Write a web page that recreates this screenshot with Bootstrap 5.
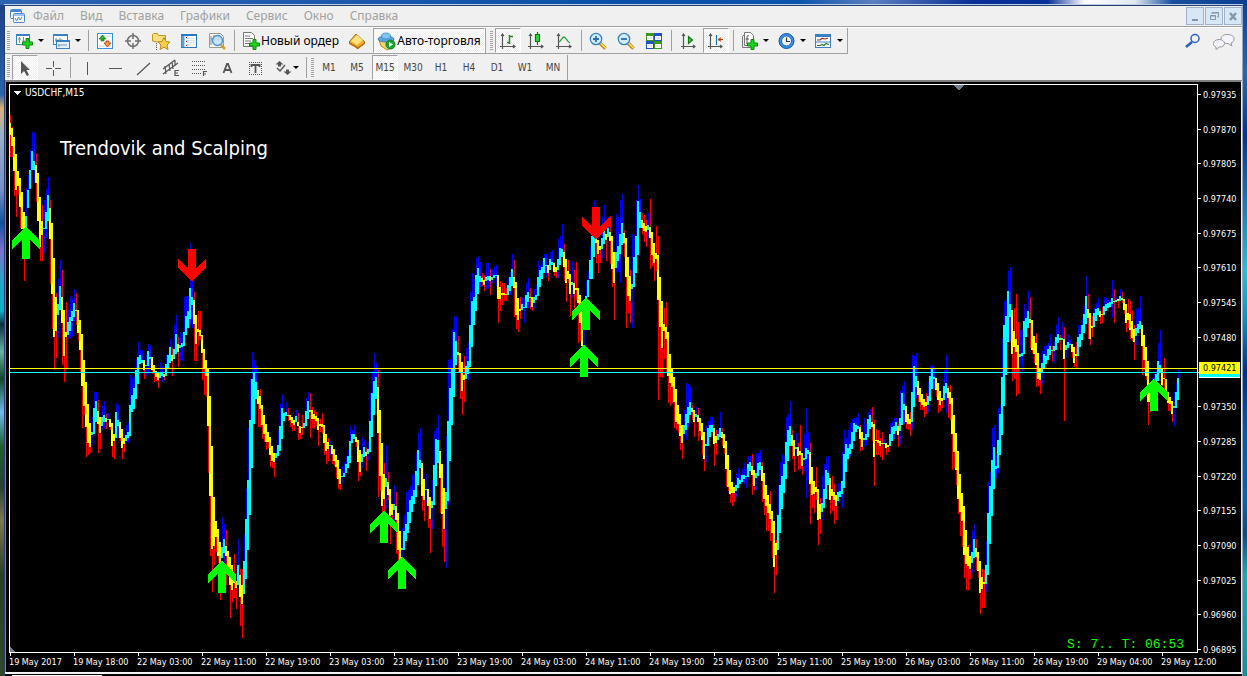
<!DOCTYPE html>
<html lang="ru">
<head>
<meta charset="utf-8">
<meta name="viewport" content="width=device-width, initial-scale=1">
<title>USDCHF,M15</title>
<link rel="stylesheet" href="https://cdn.jsdelivr.net/npm/bootstrap@5.3.0/dist/css/bootstrap.min.css">
<style>
body{font-family:"Noto Sans",sans-serif;font-size:12px;line-height:16px;padding:5px 4px 0 4px;overflow:hidden;
 background:
 linear-gradient(90deg,#2c62b0,#1a58ae 30%,#0a50a8 50%,#0c55ac 64%,#5b80c0 70%,#0a2f96 78%,#05309a 84%,#fff 87%,#e0e8f0 91%,#1a4fa0 94%,#0b3f94) 0 0/100% 5px no-repeat,
 linear-gradient(180deg,#1c3f88,#2a62b4 14%,#e0b070 16%,#9ab0c8 20%,#7890c8 28%,#1050a0 33%,#8070d0 37%,#20a8c8 42%,#10b0cc 46%,#0a3040 48%,#68b0a0 52%,#104828 56%,#70b8f0 61%,#206030 66%,#284038 72%,#807850 77%,#284028 85%,#304828) 0 0/5px 100% no-repeat,
 linear-gradient(180deg,#0b3f94,#2a66b0 11%,#08308c 20%,#1a60a8 27%,#28c0d0 40%,#1090c0 47%,#062c84 55%,#0858a4 64%,#0c60a8 74%,#104878 79%,#20a8b0 85%,#189098) right 0/6px 100% no-repeat,#1b4a98}
.frame{border:1px solid #24406c;border-bottom:0;border-right-color:#93a9c4;background:#f0f0f0;box-shadow:0 -1px 0 #b8cce8}
.menubar{height:21px;border-bottom:1px solid #a0a0a0}
.menubar a{color:#a0a0a0;text-decoration:none}
.menubar nav{gap:16px;padding-left:7px}
.winbtns{gap:1px}
.wbtn{width:18px;height:18px;border:1px solid #9fb2c8;background:#d8e7f5;padding:0;line-height:0}
.tools{height:26px}
.tools.first{border-top:1px solid #fff;height:27px}
.tbar{height:26px;border-bottom:1px solid #a0a0a0;border-right:1px solid #a0a0a0}
.tbar.second{border-bottom:0;height:25px;margin-top:1px}
.grip{width:6px;height:20px;background:repeating-linear-gradient(#a4a4a4 0 1px,#f0f0f0 1px 2px) 2px 0/3px 20px no-repeat}
.sepr{width:6px;height:21px;background:linear-gradient(#a0a0a0,#a0a0a0) 3px 0/1px 100% no-repeat}
.edge{width:3px;height:25px;border-left:1px solid #a0a0a0}
.tb{width:28px;height:25px;border:0;background:none;padding:0;color:#444;font-size:10px;line-height:23px;font-family:"DejaVu Sans Condensed","Noto Sans",sans-serif;white-space:nowrap;display:flex;align-items:center;justify-content:center}
.tb svg,.wbtn svg,.gl{display:block;flex:none}
.tb.down{width:26px;margin:0 1px;border:1px solid #fff;border-top-color:#a0a0a0;border-left-color:#a0a0a0;background:repeating-conic-gradient(#fff 0 25%,#efefef 0 50%) 0 0/2px 2px}
.tb.dd{width:37px;gap:3px;justify-content:flex-start;padding-left:4px}
.tb.dd.tight{width:34px;gap:0}
.tb.txt{color:#000;font:12px/20px "Noto Sans",sans-serif}
.tb.short{height:20px}
.tb.order{width:106px}
.tb.auto{width:112px;margin:0 0 0 2px}
.dd::after{content:"";border:3px solid transparent;border-top-color:#000;border-bottom:0}
.client{border-top:2px solid #808080;border-left:1px solid #808080;border-right:1px solid #f0f0f0;background:#000;min-height:0}
.chartbox{height:100%;width:100%;display:block}
.chartbox text{font-family:"DejaVu Sans Condensed","DejaVu Sans",sans-serif;font-size:9px;fill:#fff}
.under{height:4px;border-top:2px solid #f4f4f4;background:linear-gradient(#fff,#fff) 7px 1px/90px 2px no-repeat #000}
</style>
</head>
<body class="vh-100">
<div class="frame d-flex flex-column h-100">
 <header class="menubar d-flex align-items-center justify-content-between flex-shrink-0">
  <div class="d-flex align-items-center">
   <svg class="gl ms-1" width="17" height="17" viewBox="0 0 17 17" fill="#fff" stroke="#4a86d8"><rect x="1.5" y="1.5" width="11" height="9" rx="1"/><path d="M2 3h10" stroke-width="2"/><rect x="4.500" y="5.500" width="11" height="9" rx="1"/><path d="M5 7h10M6 10l1.500 3 2-4 1.500 3 2-3" fill="none"/></svg>
   <nav class="d-flex"><a href="#">Файл</a><a href="#">Вид</a><a href="#">Вставка</a><a href="#">Графики</a><a href="#">Сервис</a><a href="#">Окно</a><a href="#">Справка</a></nav>
  </div>
  <div class="d-flex winbtns">
   <button class="wbtn" aria-label="Свернуть"><svg width="16" height="16" viewBox="0 0 16 16"><path d="M5 11h6v2H5z" fill="#8496ac"/></svg></button>
   <button class="wbtn" aria-label="Восстановить"><svg width="16" height="16" viewBox="0 0 16 16" fill="none" stroke="#8496ac"><path d="M6 6V4.500h6.500V9H11M6 5h7" /><path d="M4.500 7.500h5v4h-5zM4 8h6" /></svg></button>
   <button class="wbtn" aria-label="Закрыть"><svg width="16" height="16" viewBox="0 0 16 16"><path d="M5 5l6 7M11 5l-6 7" stroke="#8496ac" stroke-width="2.400"/></svg></button>
  </div>
 </header>
 <div class="tools first d-flex justify-content-between align-items-start flex-shrink-0">
  <div class="tbar d-flex align-items-center">
   <span class="grip"></span>
   <button class="tb dd" aria-label="Новый график"><svg width="20" height="20" viewBox="0 0 20 20"><rect x="1.500" y="3.500" width="13" height="10" fill="#fff" stroke="#3a80c4"/><path d="M1 4h14" stroke="#3a80c4" stroke-width="2"/><path d="M4.500 6v6M3 8h3M8.500 6v6M7 10h3" stroke="#7898b8"/><path d="M11 7.500h3v3.500h3.500v3H14v3.500h-3V14H7.500v-3H11z" fill="#18d818" stroke="#0a8a10"/></svg></button>
   <button class="tb dd" aria-label="Профили"><svg width="20" height="20" viewBox="0 0 20 20" fill="#fff" stroke="#3a80c4"><rect x="1.500" y="3.500" width="14" height="10"/><path d="M1 4h15" stroke-width="2"/><path d="M4 7v4M8 7v4M3 9h8" stroke="#7898b8"/><rect x="4.500" y="9.500" width="13" height="8" fill="#e8f2fc"/><path d="M4 10h14" stroke-width="2"/><path d="M7 13v3M6 14h9" stroke="#7898b8"/></svg></button>
   <span class="sepr"></span>
   <button class="tb" aria-label="Обзор рынка"><svg width="20" height="20" viewBox="0 0 20 20"><rect x="2.500" y="2.500" width="15" height="15" fill="#fff" stroke="#3a90dc"/><path d="M4 5h12M4 15h12" stroke="#c4d8e8"/><path d="M7.500 4l3.500 4H9v2H6V8H4z" fill="#20b020" stroke="#0a7a10" stroke-width=".6"/><path d="M12.500 16L9 12h2v-2h3v2h2z" fill="#ff9040" stroke="#b03808" stroke-width=".8"/></svg></button>
   <button class="tb" aria-label="Окно данных"><svg width="20" height="20" viewBox="0 0 20 20" fill="none" stroke="#707070" stroke-width="1.500"><circle cx="10" cy="10" r="5.500"/><path d="M10 2v6M10 12v6M2 10h6M12 10h6"/></svg></button>
   <button class="tb" aria-label="Навигатор"><svg width="20" height="20" viewBox="0 0 20 20"><path d="M1.500 10V3.500l1-1h4l1 2h7V11h-8z" fill="#fce080" stroke="#c09020"/><path d="M5.500 12v7" stroke="#555" stroke-dasharray="1 1"/><path d="M13 6.500l2 4 4 .5-3 3 1 4.500-4-2.300-4 2.300 1-4.500-3-3 4-.5z" fill="#f8d048" stroke="#b88820"/></svg></button>
   <button class="tb" aria-label="Терминал"><svg width="20" height="20" viewBox="0 0 20 20"><rect x="2.500" y="3.500" width="15" height="13" fill="#fff" stroke="#2a78c4"/><path d="M2 4h16" stroke="#2a78c4" stroke-width="2"/><path d="M4 5v11" stroke="#5aa0e0" stroke-width="3"/><path d="M7 7.500h9M7 9.500h9M7 11.500h9M7 13.500h9" stroke="#d4e0ea"/><path d="M7.500 6v9" stroke="#e02020" stroke-dasharray="1 3"/></svg></button>
   <button class="tb" aria-label="Тестер стратегий"><svg width="20" height="20" viewBox="0 0 20 20"><path d="M2.500 2.500h11l3 3v11h-14z" fill="#f4f4f4" stroke="#999"/><path d="M4 5v9M7 4v8M4 8h10M11 4v6" stroke="#888"/><circle cx="10.500" cy="9.500" r="5" fill="#bfe2fa" fill-opacity=".85" stroke="#4890c8" stroke-width="1.300"/><path d="M14 14l4 4" stroke="#d0a020" stroke-width="2.500"/></svg></button>
   <span class="sepr"></span>
   <button class="tb txt order"><svg width="20" height="20" viewBox="0 0 20 20"><path d="M2.500 1.500h8l3 3v11h-11z" fill="#fff" stroke="#777"/><path d="M4 5h5M4 7.500h8M4 10h6M4 12.500h4" stroke="#777"/><path d="M12 8.500h3v3.500h3.500v3H15v3.500h-3V15H8.500v-3H12z" fill="#18d818" stroke="#0a8a10"/></svg>Новый ордер</button>
   <button class="tb" aria-label="MetaEditor"><svg width="20" height="20" viewBox="0 0 20 20"><path d="M2 11l7-8 9 8-7 7z" fill="#e8b030" stroke="#a87010"/><path d="M4 10l6-6 6 5-6 5z" fill="#ffe080"/><path d="M2 11l9 5 7-5v2l-7 5-9-5z" fill="#b87818"/></svg></button>
   <button class="tb txt down auto"><svg width="20" height="20" viewBox="0 0 20 20"><path d="M2 9l2 6 6 4 6-3V9z" fill="#f0d070" stroke="#b89028"/><ellipse cx="9" cy="8" rx="8" ry="3" fill="#58a8e0" stroke="#2868a0" stroke-width=".7"/><ellipse cx="9" cy="5" rx="4.500" ry="3" fill="#80c4f0" stroke="#3880b8" stroke-width=".7"/><circle cx="13.500" cy="13.500" r="4.500" fill="#18a830" stroke="#0a8020"/><path d="M12 11l4 2.500-4 2.500z" fill="#fff"/></svg>Авто-торговля</button>
   <span class="edge"></span><span class="grip"></span>
   <button class="tb down" aria-label="Бары"><svg width="20" height="20" viewBox="0 0 20 20" fill="none" stroke="#555" stroke-width="1.200"><path d="M4.500 3v15M2 15.500h15M3 5l1.500-2L6 5M15 14l2 1.500-2 1.500"/><path d="M11.500 4v9M9 11.500h3M12 5.500h3" stroke="#1a8a20" stroke-width="1.500"/></svg></button>
   <button class="tb" aria-label="Свечи"><svg width="20" height="20" viewBox="0 0 20 20" fill="none" stroke="#555" stroke-width="1.200"><path d="M4.500 3v15M2 15.500h15M3 5l1.500-2L6 5M15 14l2 1.500-2 1.500"/><path d="M11.500 1v13" stroke="#0a7a10"/><path d="M9.500 3.500h4v7h-4z" fill="#30d840" stroke="#0a7a10"/></svg></button>
   <button class="tb" aria-label="Линия"><svg width="20" height="20" viewBox="0 0 20 20" fill="none" stroke="#555" stroke-width="1.200"><path d="M4.500 3v15M2 15.500h15M3 5l1.500-2L6 5M15 14l2 1.500-2 1.500"/><path d="M5 11c3-2 3-5 5-5s3 5 6 6" stroke="#30a040" stroke-width="1.300"/></svg></button>
   <span class="sepr"></span>
   <button class="tb" aria-label="Увеличить"><svg width="20" height="20" viewBox="0 0 20 20"><path d="M12 12l5.500 5.500" stroke="#b88818" stroke-width="3.500"/><path d="M12.500 12l5 5" stroke="#ffe060" stroke-width="1.500"/><circle cx="8" cy="8" r="5.700" fill="#d0ecfc" stroke="#3a80c4" stroke-width="1.300"/><path d="M8 5v6M5 8h6" stroke="#2a70b4" stroke-width="1.800"/></svg></button>
   <button class="tb" aria-label="Уменьшить"><svg width="20" height="20" viewBox="0 0 20 20"><path d="M12 12l5.500 5.500" stroke="#b88818" stroke-width="3.500"/><path d="M12.500 12l5 5" stroke="#ffe060" stroke-width="1.500"/><circle cx="8" cy="8" r="5.700" fill="#d0ecfc" stroke="#3a80c4" stroke-width="1.300"/><path d="M5 8h6" stroke="#2a70b4" stroke-width="1.800"/></svg></button>
   <button class="tb" aria-label="Окна мозаикой"><svg width="20" height="20" viewBox="0 0 20 20"><path d="M2 2h8v8H2zM10 10h8v8h-8z" fill="#3a9a10"/><path d="M10 2h8v8h-8zM2 10h8v8H2z" fill="#2050c8"/><path d="M3 5h6v4H3zM11 5h6v4h-6zM3 13h6v4H3zM11 13h6v4h-6z" fill="#fff"/><path d="M4 7h4M12 7h4M4 15h4M12 15h4" stroke="#c0d8e8"/></svg></button>
   <span class="sepr"></span>
   <button class="tb" aria-label="Автопрокрутка"><svg width="20" height="20" viewBox="0 0 20 20" fill="none" stroke="#555" stroke-width="1.200"><path d="M5.500 3v15M3 15.500h14M4 5l1.500-2L7 5M15 14l2 1.500-2 1.500"/><path d="M10.500 5.500v7l4-3.500z" fill="#30d040" stroke="#0a7a10"/></svg></button>
   <button class="tb down" aria-label="Сдвиг графика"><svg width="20" height="20" viewBox="0 0 20 20" fill="none" stroke="#555" stroke-width="1.200"><path d="M4.500 3v15M2 15.500h14M3 5l1.500-2L6 5M14 14l2 1.500-2 1.500"/><path d="M10.500 4v10" stroke="#2870a8"/><path d="M12 8.500h5" stroke="#c04010"/><path d="M14.500 6.500v4l-2.500-2z" fill="#c04010" stroke="#c04010" stroke-width=".5"/></svg></button>
   <span class="sepr"></span>
   <button class="tb dd" aria-label="Индикаторы"><svg width="20" height="20" viewBox="0 0 20 20"><path d="M2.500 5.500v11h8v-13h-6z" fill="#eee" stroke="#777"/><path d="M4.500 1.500h6l3 3v10h-9z" fill="#fff" stroke="#777"/><path d="M9 5c-2-1-2 1-2 2v6M5.500 8H9" fill="none" stroke="#555"/><path d="M11 8.500h3v3.500h3.500v3H14v3.500h-3V15H7.500v-3H11z" fill="#18d818" stroke="#0a8a10"/></svg></button>
   <button class="tb dd" aria-label="Периоды"><svg width="20" height="20" viewBox="0 0 20 20"><circle cx="9.500" cy="10" r="7.500" fill="#3a90e8" stroke="#1050a0"/><circle cx="9.500" cy="10" r="5" fill="#f0f4f8" stroke="#1868c0"/><path d="M9.500 6.500v4h3.500" fill="none" stroke="#333" stroke-width="1.200"/></svg></button>
   <button class="tb dd" aria-label="Шаблоны"><svg width="20" height="20" viewBox="0 0 20 20"><rect x="1.500" y="3.500" width="15" height="13" fill="#fff" stroke="#3a80c4"/><path d="M1 4.500h16" stroke="#3a80c4" stroke-width="3"/><path d="M2 11h14" stroke="#3a80c4"/><path d="M3 9h3l2-1.500 3 .5 3-1" fill="none" stroke="#a03020" stroke-width="1.200"/><path d="M3 14.500h3l2-1 2 1 2-2 3 1" fill="none" stroke="#208030" stroke-width="1.200"/></svg></button>
  </div>
  <div class="d-flex pt-1 pe-1 gap-1">
   <button class="tb short" aria-label="Поиск"><svg width="20" height="18" viewBox="0 0 20 18" fill="none" stroke="#2860d0"><circle cx="13" cy="5.500" r="4" stroke-width="1.500"/><path d="M10 9l-6 5" stroke-width="2.500"/></svg></button>
   <button class="tb short" aria-label="Чат"><svg width="24" height="18" viewBox="0 0 24 18" fill="#f4f4fa" stroke="#999"><path d="M15 1.500c5 0 7 2 7 4.500 0 2-1 3.500-3 4l1 3-4-2.500c-5 0-7-2-7-4.500s2-4.500 6-4.500z"/><path d="M7 6.500c3 0 5.500 1.500 5.500 4S10 14 7.500 14L4 16.500V14c-2-.8-2.500-2-2.500-3.500 0-2 2-4 5.500-4z"/></svg></button>
  </div>
 </div>
 <div class="tools d-flex flex-shrink-0">
  <div class="tbar second d-flex align-items-center">
   <span class="grip"></span>
   <button class="tb down" aria-label="Курсор"><svg width="20" height="20" viewBox="0 0 20 20"><path d="M6 3v13l3-3 3 5 2-1-2.500-5H15z" fill="#555"/></svg></button>
   <button class="tb" aria-label="Перекрестие"><svg width="20" height="20" viewBox="0 0 20 20"><path d="M10.500 3v6M10.500 12v6M3 10.500h6M12 10.500h6" stroke="#555"/></svg></button>
   <span class="sepr"></span>
   <button class="tb" aria-label="Вертикальная линия"><svg width="20" height="20" viewBox="0 0 20 20"><path d="M10.500 4v13" stroke="#555"/></svg></button>
   <button class="tb" aria-label="Горизонтальная линия"><svg width="20" height="20" viewBox="0 0 20 20"><path d="M4 10.500h13" stroke="#555"/></svg></button>
   <button class="tb" aria-label="Трендовая линия"><svg width="20" height="20" viewBox="0 0 20 20"><path d="M4 17L17 5" stroke="#555" stroke-width="1.200"/></svg></button>
   <button class="tb" aria-label="Равноудаленный канал"><svg width="20" height="20" viewBox="0 0 20 20" fill="none" stroke="#555" stroke-width="1.200"><path d="M2 11L14 2M2 16L17 5M4 8l1 8M8 6l1 7M11 4l1 7M14 2v6"/><path d="M18 12.500h-4v5h4M14 15h3"/></svg></button>
   <button class="tb" aria-label="Линии Фибоначчи"><svg width="20" height="20" viewBox="0 0 20 20" fill="none" stroke="#555"><path d="M3 3.500h14M3 7.500h14M3 11.500h14M3 15.500h9" stroke-dasharray="1 1"/><path d="M14.500 18v-4.500H18M14 16h3" stroke-width="1.200"/></svg></button>
   <button class="tb fs-6 fw-bold" aria-label="Текст"><svg width="20" height="20" viewBox="0 0 20 20" fill="none" stroke="#555" stroke-width="1.800"><path d="M6.500 15L10 6h1l3.500 9M8 12h5"/></svg></button>
   <button class="tb" aria-label="Текстовая метка"><svg width="20" height="20" viewBox="0 0 20 20" fill="none" stroke="#555"><path d="M4 4.500h13M4 16.500h13M4.500 4v13M16.500 4v13" stroke-dasharray="1 1"/><path d="M6.500 9V7h8v2M10.500 7v8" stroke-width="1.800"/></svg></button>
   <button class="tb dd tight" aria-label="Стрелки"><svg width="20" height="20" viewBox="0 0 20 20" fill="#555"><path d="M6.500 3l4 3.500h-2.500v2H5v-2H2.500zM14.500 17l-4-3.500H13v-2h3v2h2.500z"/><path d="M4 10l3 3 5-6" fill="none" stroke="#555" stroke-width="1.400"/></svg></button>
   <span class="sepr"></span><span class="grip"></span>
   <button class="tb">M1</button><button class="tb">M5</button><button class="tb down">M15</button><button class="tb">M30</button><button class="tb">H1</button><button class="tb">H4</button><button class="tb">D1</button><button class="tb">W1</button><button class="tb">MN</button>
  </div>
 </div>
 <main class="client flex-grow-1"><svg class="chartbox" id="chart" role="img" aria-label="USDCHF M15"></svg></main>
 <div class="under flex-shrink-0"></div>
</div>
<script src="https://cdn.jsdelivr.net/npm/bootstrap@5.3.0/dist/js/bootstrap.bundle.min.js"></script>
<script>
// Heiken Ashi bars, one every 2px. Falling runs (D): top,bottom,low[,high]; rising runs (U): top,bottom,high[,low].
const bars = `D 123,135,157,115 128,146,157,127 137,171,196 154,190,217 171,186,195 178,207,228 192,229,229 212,230,281
U 216,227,188 190,208,175 170,189,150 151,170,132 161,170,133,183
D 165,183,202,153 173,221,221 197,247,261 221,235,261,205
U 228,229,200,253 212,229,189,238 195,221,177
D 208,239,284,200 223,294,329 258,337,370 297,331,358,293
U 304,315,279,338 286,310,260
D 297,323,365,270 310,356,382 332,337,368,302
U 322,335,310,339 317,331,296,338 311,321,299,336 303,317,289,321
D 310,311,325,293 310,333,341 320,350,373 334,386,428 360,406,415 382,427,457 404,443,455 423,447,453
U 432,435,417,445 408,434,392 401,422,392
D 411,424,453,400 417,433,449
U 417,426,406,430 415,422,401,428
D 418,422,429,414
U 419,420,413
D 419,427,430 423,446,457 434,441,459
U 412,438,403 420,426,405,438
D 422,438,441 429,448,459 438,444,452
U 435,441,425,442 432,438,422,443 405,436,375 395,412,378 388,409,376 370,399,359 357,384,342 355,364,350 360,363,350
D 360,370,379
U 365,366,355,376 351,366,344,374 357,359,346,365
D 357,370,374 365,372,382 371,377,381 373,380,388
U 373,378,362 372,376,366,382
D 374,377,380
U 364,376,355 355,369,354 347,363,339
D 355,361,376,348
U 349,359,325 334,354,315
D 344,352,367,337
U 345,348,332,360 343,347,333,361 332,346,297 316,335,296 311,328,296 288,319,243,325 297,305,281,328
D 300,324,361,292 315,344,361 329,332,345,311 330,336,340,311 335,353,380 349,368,395 360,376,397 368,426,473 396,496,556 446,549,592 497,546,565 521,537,552 529,556,563 542,563,600
U 547,558,517 539,553,524,575
D 546,556,585,530 551,567,570 557,585,618 565,590,602 575,583,598,554 581,588,609
U 565,585,539
D 575,597,626,569 585,604,638,569
U 561,594,534 519,579,489 480,550,428 420,515,379 379,468,352 373,424,360 382,399,366
D 390,404,427 396,409,427,389 405,425,439 415,434,442 424,442,450 432,442,448 437,455,467 446,461,468 453,462,477
U 453,458,450,461 445,456,430 426,451,404 408,439,395 413,421,412 412,416,402
D 415,416,421,408 415,420,427 417,423,431 420,425,431
U 416,422,410
D 422,426,440,413 426,433,439 427,428,435,415
U 423,428,423 411,426,398 401,419,392
D 410,412,438,393 410,419,428,407 414,419,429,410 416,421,426,412 418,430,446 424,426,432,419 424,427,434,413 425,443,455 434,451,464 442,449,461,438
U 445,446,441,455
D 445,454,464 449,461,466 455,467,478 460,479,489 469,484,490
U 476,477,466,484 473,477,462 464,473,456 456,468,450 441,463,426 434,443,430 434,439,425
D 437,442,447 440,462,481 450,472,476
U 454,462,437,468 447,457,440
D 452,456,471,448
U 449,454,442,460 421,452,393 393,437,371 381,415,353 377,399,363
D 387,433,497,370 410,476,491 443,506,512 474,499,520,463
U 478,487,445,509
D 482,495,500,472 489,516,544 504,515,520
U 504,510,485,521
D 506,520,554,492 513,550,560 531,559,559
U 548,550,528,558 531,550,515 524,541,492 512,533,490 500,523,486 496,512,474 490,504,475 471,497,453 450,485,433 460,468,428
D 463,496,511 479,500,521
U 489,490,474,503
D 489,506,528 497,519,553
U 501,508,480,529 465,505,431 439,486,428 440,463,415
D 451,478,513 464,514,547 488,529,562
U 492,509,436,568 421,501,360,505 388,461,359 368,425,329 332,397,316 341,365,317
D 352,355,372,336 353,372,399 362,391,415 375,380,402,356
U 366,379,348 361,374,342,380 325,367,292 301,347,273 297,325,279 275,311,258 268,294,256 276,282,262,287
D 278,282,286,273 280,285,291,275
U 277,281,263,289 276,280,263,288
D 276,281,295,269
U 277,280,269,283 275,278,266 275,276,265,286
D 275,299,323 287,299,311,281 293,295,305,283 293,295,301,283 294,295,301,288
U 285,295,278 277,291,272,295 269,286,254
D 277,288,317,260 282,315,329 298,320,332 309,311,319,297
U 304,310,297 307,308,299,323 295,308,283 292,302,278,308
D 297,298,309,288 297,307,311
U 297,303,289,308 295,300,285 277,296,261 270,287,265 267,279,261 258,273,254 265,266,254,277
D 265,273,281
U 259,270,252 262,265,250
D 263,272,276 267,272,278
U 259,270,239,278 248,265,236 249,257,224
D 252,267,281,244 259,283,302 271,279,283,260 274,294,316
U 282,285,261,297
D 283,294,309,270 288,290,300,262 288,303,343 295,323,341 311,346,346
U 310,320,300,345 296,315,281 280,297,271 260,279,246 236,279,225 237,257,200
D 239,243,263 240,254,273 246,250,263
U 238,249,217,259 230,244,205
D 234,240,261
U 228,237,217
D 232,241,264,216 236,269,287 252,283,320
U 252,268,214,273 246,261,217,272 234,254,200,283 223,245,194
D 233,243,257,230 238,277,328 257,296,313 276,301,323,270
U 284,289,234,328 257,287,237 236,273,200 201,255,185 212,228,199
D 220,228,235,213 223,231,242,215 226,232,247,220
U 225,230,213,239
D 227,238,269,199 232,255,266 243,263,281 253,259,271,226 255,300,400,236 277,327,377 301,348,378 324,331,359,308 327,339,372,302 332,376,403 354,383,406 369,387,403 377,402,428 389,422,430 405,424,433 414,436,450 425,443,459
U 425,434,410,436 414,430,383,440 407,423,384,427 402,415,387
D 408,412,420,405 410,422,437
U 414,417,407,421
D 415,422,441,408 418,431,436 423,440,455 432,459,471
U 444,446,426,462 428,446,421 425,437,417 425,432,417
D 428,444,466 436,443,455,430
U 434,440,429 428,437,412
D 432,438,446,428 434,448,454 441,469,486 455,487,491 470,494,503 482,493,506 487,493,502
U 485,491,474,497 478,488,468 480,484,475 475,482,469 475,479,463,484 476,477,468,488 464,477,456 462,471,456
D 466,475,495,454 470,486,490
U 473,478,453,490 463,476,453 462,470,450,475
D 466,481,502,462 473,499,515 485,506,531 495,513,531 504,519,541,491 511,533,558 521,567,593 543,555,575,540
U 515,550,486 485,533,462 476,509,454 464,493,456 442,479,417 430,461,414 426,446,401
D 435,446,459,430 440,456,472
U 447,449,433,455
D 447,456,470,443 451,455,469,425 453,466,475
U 458,460,434,471 448,459,408,498 450,454,432,480
D 452,484,524,443 467,495,508 481,494,513 487,492,500,467 489,520,545 504,519,534,498
U 503,512,476,520 489,508,464 470,499,457 473,485,456
D 478,500,514 489,496,511,476 492,500,524,484 495,506,520
U 492,501,483,503 491,497,483 481,494,452,508 454,488,430 444,472,438 448,459,430 444,454,423,456 432,449,419 423,441,418 425,432,417 426,429,413
D 427,439,451,425 432,447,450
U 438,440,418,447 434,440,424,445 419,437,412 415,429,409
D 422,427,441,407 424,457,486,420 440,441,455,429 440,443,455,430 441,446,457,438 443,444,460,432
U 443,444,439
D 443,448,455 445,447,452
U 434,446,423 427,441,421 426,434,418,439 422,431,418
D 426,435,447,424
U 418,431,391,444 393,425,386 404,410,381,424
D 406,422,429 414,424,430 419,424,436,412
U 392,422,355,429 366,407,356 376,387,353,398
D 381,395,402 388,402,410 394,405,410 399,407,417 402,406,414,393
U 396,405,382,412 376,401,366 368,389,365 377,379,368,389
D 378,390,397 383,400,413 391,405,411 398,401,408
U 386,400,370 383,393,355,413
D 388,398,418,386 392,404,420,385 398,434,470 415,452,468 433,470,485 451,499,514 474,512,536 493,521,547 506,555,578 530,564,590 547,566,590,545 556,569,579
U 552,563,531,573 539,558,524
D 548,557,570,539 552,571,578 561,593,614 577,589,608,569 582,584,608,570
U 565,584,541,592 513,575,482 486,544,472 460,516,428 447,489,425 466,469,455,478 440,468,408,473 414,455,405 377,435,339 325,406,301 316,375,299 291,342,271 304,317,267,341
D 310,354,381 331,347,379,308 339,352,396,294 345,368,394,322
U 354,357,330,365 353,356,330,371 321,354,304 318,337,310 311,328,291
D 319,323,348,297 320,350,353 336,354,363 343,365,387,333 353,379,386 368,380,394
U 363,372,351,384 354,368,346 356,364,345 349,360,343 346,355,334
D 350,351,361,346
U 346,351,341,363 337,350,325 334,343,317
D 338,340,350,335
U 338,340,322
D 339,359,421,327
U 345,350,341,358 342,348,335 344,345,340
D 344,352,358 347,363,367 354,356,368,342
U 337,356,325 334,347,325 325,340,319 314,333,306 296,324,276
D 309,318,339,294 313,339,345 326,328,337,316
U 313,327,308 309,321,303 308,315,298
D 311,317,324 314,315,323,307
U 306,315,297 304,311,298 303,308,300 302,307,299 298,304,280,318
D 301,302,323,289
U 300,302,297
D 299,301,308
U 296,301,289
D 298,300,303,292 299,310,314 304,323,332 313,320,328,299 314,330,339,301 321,338,341,311 329,342,360,325
U 328,336,309,345 324,333,308 321,329,296
D 325,346,375 335,360,370 347,376,380 361,402,425 390,402,412
U 384,392,378 380,390,374 374,381,370 361,381,343 365,372,330
D 368,385,386 378,379,398,358 379,392,394 392,403,411 397,404,411 401,414,422
U 406,408,392,426 392,408,383 378,400,370`;
const times = ['19 May 2017','19 May 18:00','22 May 03:00','22 May 11:00','22 May 19:00','23 May 03:00','23 May 11:00','23 May 19:00','24 May 03:00','24 May 11:00','24 May 19:00','25 May 03:00','25 May 11:00','25 May 19:00','26 May 03:00','26 May 11:00','26 May 19:00','29 May 04:00','29 May 12:00'];
const signals = [[26,227,1],[222,561,1],[384,511,1],[402,557,1],[586,298,1],[584,345,1],[1154,379,1],[192,281,-1],[596,239,-1]];
const svg = document.getElementById('chart');
const X0 = 6, Y0 = 82;
function draw() {
  const w = svg.clientWidth, h = svg.clientHeight;
  const right = X0 + w - 44, bottom = Y0 + h - 20, k = (bottom - 84) / 568;
  const Y = v => Math.round(84 + (v - 84) * k);
  const rect = (x, y, rw, rh, f) => `<rect x="${x}" y="${y}" width="${rw}" height="${rh}" fill="${f}"/>`;
  const text = (x, y, s, more = '') => `<text x="${x}" y="${y}" ${more}>${s}</text>`;
  let wicks = '', bodies = '', x = 10;
  for (const line of bars.split('\n')) {
    const [dir, ...list] = line.trim().split(' '), up = dir === 'U';
    for (const item of list) {
      const [t, b, far, near] = item.split(',').map(Number);
      const hi = Math.min(t, up ? far : near ?? t), lo = Math.max(b, up ? near ?? b : far);
      wicks += rect(x, Y(hi), 1, Y(lo) - Y(hi), up ? '#00f' : '#f00');
      bodies += rect(x - 1, Y(t), 2, Math.max(1, Y(b) - Y(t)), up ? '#0ff' : '#ff0');
      x += 2;
    }
  }
  let out = wicks + bodies;
  out += rect(9, Y(368), right - 9, 1, '#ff0') + rect(9, Y(372), right - 9, 1, '#0ff');
  for (const [cx, cy, s] of signals)
    out += `<path transform="translate(${cx} ${Y(cy)}) scale(1 ${s})" d="M0 0L14 13V22L4 13V32H-4V13L-14 22V13z" fill="${s > 0 ? '#0f0' : '#f00'}"/>`;
  out += rect(9, 84, right - 8, 1, '#fff') + rect(9, 84, 1, bottom - 83, '#fff') + rect(right, 84, 1, bottom - 83, '#fff') + rect(9, bottom, right - 8, 1, '#fff');
  out += `<path d="M953 85h11l-5 5h-1zM10 ${bottom - 5}v5h5z" fill="#708090"/><path d="M13 91h8l-4 4z" fill="#fff"/>`;
  for (let i = 0; i < 17; i++) {
    const y = Y(94 + i * 555 / 16);
    out += rect(right + 1, y, 3, 1, '#fff');
    if (i !== 8) out += text(right + 6, y + 4, (0.97935 - i * 0.00065).toFixed(5));
  }
  out += rect(right + 2, Y(369), 41, 8, '#0ff') + rect(right + 2, Y(377), 41, 1, '#fff');
  out += rect(right + 2, Y(362), 41, 12, '#ff0') + text(right + 6, Y(371), '0.97421', 'style="fill:#000"');
  times.forEach((t, i) => { out += rect(10 + i * 64, bottom + 1, 1, 3, '#fff') + text(9 + i * 64, bottom + 13, t); });
  out += text(25, 96, 'USDCHF,M15', 'style="font-size:10px"') + text(60, 155, 'Trendovik and Scalping', 'style="font-size:20px"');
  out += text(right - 130, bottom - 4, 'S: 7.. T: 06:53', 'style="font:13px \'Liberation Mono\',monospace;fill:#0f0"');
  svg.setAttribute('viewBox', `${X0} ${Y0} ${w} ${h}`);
  svg.innerHTML = `<g shape-rendering="crispEdges">${out}</g>`;
}
draw();
addEventListener('resize', draw);
</script>
</body>
</html>
